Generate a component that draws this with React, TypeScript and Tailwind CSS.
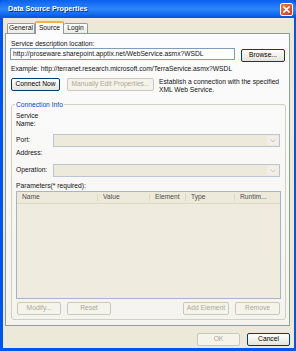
import clsx from "clsx"

type BtnProps = {
  label: string
  className: string
  disabled?: boolean
}

function Btn({ label, className, disabled }: BtnProps) {
  return (
    <div
      className={clsx(
        "h-[13px] shrink-0 flex items-center justify-center rounded-[2px] border leading-none",
        disabled
          ? "border-[#CAC8BB] text-[#ACA899] bg-[#F5F4EA]"
          : "border-[#003C74] text-black bg-gradient-to-b from-white to-[#E4E3DC]",
        className
      )}
    >
      {label}
    </div>
  )
}

function Combo({ className }: { className: string }) {
  return (
    <div className={clsx("h-[13px] flex border border-[#BCC6D1] bg-[#EEEADB]", className)}>
      <div className="flex-1" />
      <div className="w-[11px] m-[1px] rounded-[1px] bg-[#F2F0E6] flex items-center justify-center">
        <svg width="6" height="4" viewBox="0 0 6 4">
          <path d="M0.5 0.5 L3 3 L5.5 0.5" fill="none" stroke="#C3C6CC" strokeWidth="1" />
        </svg>
      </div>
    </div>
  )
}

const columns = [
  { name: "Name", w: "w-[81px]" },
  { name: "Value", w: "w-[52px]" },
  { name: "Element", w: "w-[36px]" },
  { name: "Type", w: "w-[49px]" },
  { name: "Runtim...", w: "flex-1" },
]

export default function App() {
  return (
    <div
      className="w-[296px] h-[351px] bg-[#0055EA] flex flex-col text-[6.7px] text-[#111]"
      style={{ fontFamily: '"Liberation Sans", Arial, sans-serif' }}
    >
      {/* title bar */}
      <div className="h-[18px] shrink-0 flex items-center justify-between pl-[8px] pr-[3px] bg-gradient-to-b from-[#0A5FEF] via-[#2D86FB] to-[#0053E6] rounded-t-[5px]">
        <span className="text-white font-bold text-[7.2px] [text-shadow:1px_1px_0_#0A2B85]">
          Data Source Properties
        </span>
        <div className="w-[13px] h-[13px] rounded-[2px] border border-white bg-gradient-to-br from-[#E8765A] to-[#C8401E] flex items-center justify-center">
          <svg width="7" height="7" viewBox="0 0 7 7">
            <path d="M1 1 L6 6 M6 1 L1 6" stroke="white" strokeWidth="1.6" strokeLinecap="square" />
          </svg>
        </div>
      </div>

      {/* body */}
      <div className="flex-1 ml-[3px] mr-[2px] mb-[3px] bg-[#ECE9D8] flex flex-col">
        {/* tabs */}
        <div className="h-[15px] shrink-0 flex items-end pl-[4px]">
          <div className="h-[10px] w-[28px] flex items-center justify-center border border-b-0 border-[#919B9C] rounded-t-[2px] bg-gradient-to-b from-white to-[#ECEBE5]">
            General
          </div>
          <div className="relative z-10 -mb-[1px] h-[13px] w-[29px] flex items-center justify-center border-x border-[#919B9C] border-t-[2px] border-t-[#F5B33C] rounded-t-[2px] bg-[#FCFCFE]">
            Source
          </div>
          <div className="h-[10px] w-[24px] flex items-center justify-center border border-b-0 border-l-0 border-[#919B9C] rounded-t-[2px] bg-gradient-to-b from-white to-[#ECEBE5]">
            Login
          </div>
        </div>

        {/* tab panel */}
        <div className="ml-[2px] w-[285px] h-[293px] shrink-0 border border-[#919B9C] bg-gradient-to-b from-[#FCFCFE] to-[#F4F3EE] px-[4px] pt-[5px] flex flex-col">
          <div className="h-[9px] leading-[9px] ml-[1px]">Service description location:</div>
          <div className="flex items-start">
            <div className="w-[225px] h-[12px] border border-[#7F9DB9] bg-white flex items-center pl-[2px] leading-none">
              http://proseware.sharepoint.apptix.net/WebService.asmx?WSDL
            </div>
            <Btn label="Browse..." className="mt-[1px] ml-[6px] w-[44px]" />
          </div>
          <div className="h-[9px] leading-[9px] mt-[2px] ml-[1px]">
            Example: http://terranet.research.microsoft.com/TerraService.asmx?WSDL
          </div>
          <div className="flex items-start mt-[5px] ml-[1px]">
            <Btn label="Connect Now" className="w-[49px]" />
            <Btn label="Manually Edit Properties..." disabled className="ml-[7px] w-[87px]" />
            <div className="ml-[5px] leading-[8px]">
              Establish a connection with the specified
              <br />
              XML Web Service.
            </div>
          </div>

          {/* connection info */}
          <fieldset className="mt-[6px] ml-[1px] w-[275px] h-[220px] border border-[#D0D0BF] rounded-[3px] px-[4px] flex flex-col">
            <legend className="px-[1px] -ml-[1px] leading-[9px] text-[#0046D5]">Connection Info</legend>
            <div className="mt-[3px] leading-[8px]">
              Service
              <br />
              Name:
            </div>
            <div className="flex items-center mt-[6px]">
              <div className="w-[37px]">Port:</div>
              <Combo className="w-[227px]" />
            </div>
            <div className="h-[9px] leading-[9px] mt-[1px]">Address:</div>
            <div className="flex items-center mt-[7px]">
              <div className="w-[37px]">Operation:</div>
              <Combo className="w-[227px]" />
            </div>
            <div className="h-[9px] leading-[9px] mt-[4px]">Parameters(* required):</div>
            <div className="mt-[1px] w-[265px] h-[108px] border border-[#A5B5C7] bg-[#EFEBDE] flex flex-col">
              <div className="h-[12px] flex border-b border-[#DCD8C8] bg-[#EEEADB] text-[#4A4A4A]">
                {columns.map((c, i) => (
                  <div
                    key={c.name}
                    className={clsx(
                      "flex items-center pl-[5px]",
                      c.w,
                      i < columns.length - 1 && "border-r border-[#DCD8C8] my-[2px]"
                    )}
                  >
                    {c.name}
                  </div>
                ))}
              </div>
            </div>
            <div className="flex mt-[3px] ml-[1px]">
              <Btn label="Modify..." disabled className="w-[44px]" />
              <Btn label="Reset" disabled className="ml-[6px] w-[44px]" />
              <div className="flex-1" />
              <Btn label="Add Element" disabled className="w-[46px]" />
              <Btn label="Remove" disabled className="ml-[6px] w-[45px] mr-[1px]" />
            </div>
          </fieldset>
        </div>

        {/* footer */}
        <div className="flex mt-[7px] pl-[194px]">
          <Btn label="OK" disabled className="h-[12px] w-[43px]" />
          <Btn label="Cancel" className="h-[12px] ml-[7px] w-[43px]" />
        </div>
      </div>
    </div>
  )
}
